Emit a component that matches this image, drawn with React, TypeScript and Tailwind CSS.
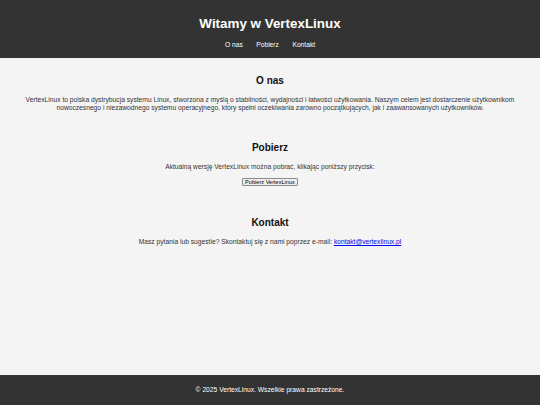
export default function App() {
  return (
    <div className="flex min-h-[405px] flex-col bg-[#f4f4f4] font-['Liberation_Sans',Arial,sans-serif] text-[#333]">
      {/* Header */}
      <header className="flex h-[58px] flex-col items-center bg-[#333] pt-[16px] text-white">
        <h1 className="text-[13.4px] leading-[16px] font-bold">Witamy w VertexLinux</h1>
        <nav className="mt-[9px] flex gap-[13.5px] text-[6.7px] leading-[8px]">
          <a href="#onas" className="text-white">O nas</a>
          <a href="#pobierz" className="text-white">Pobierz</a>
          <a href="#kontakt" className="text-white">Kontakt</a>
        </nav>
      </header>

      <main className="flex flex-1 flex-col text-center text-[6.7px] leading-[8px] text-[#333]">
        {/* O nas */}
        <section id="onas" className="px-[20px] pt-[17px]">
          <h2 className="text-[10px] leading-[12px] font-bold text-[#111]">O nas</h2>
          <p className="mt-[9px]">
            VertexLinux to polska dystrybucja systemu Linux, stworzona z myślą o stabilności, wydajności i łatwości użytkowania. Naszym celem jest dostarczenie użytkownikom nowoczesnego i niezawodnego systemu operacyjnego, który spełni oczekiwania zarówno początkujących, jak i zaawansowanych użytkowników.
          </p>
        </section>

        {/* Pobierz */}
        <section id="pobierz" className="flex flex-col items-center px-[20px] pt-[30px]">
          <h2 className="text-[10px] leading-[12px] font-bold text-[#111]">Pobierz</h2>
          <p className="mt-[9px]">Aktualną wersję VertexLinux można pobrać, klikając poniższy przycisk:</p>
          <button
            type="button"
            className="mt-[7px] h-[8px] rounded-[1px] border border-[#8a8a8a] bg-[#efefef] px-[2.5px] text-[5.6px] leading-[6px] text-black"
          >
            Pobierz VertexLinux
          </button>
        </section>

        {/* Kontakt */}
        <section id="kontakt" className="px-[20px] pt-[31px]">
          <h2 className="text-[10px] leading-[12px] font-bold text-[#111]">Kontakt</h2>
          <p className="mt-[9px]">
            Masz pytania lub sugestie? Skontaktuj się z nami poprzez e-mail:{" "}
            <a href="mailto:kontakt@vertexlinux.pl" className="text-[#0000ee] underline">
              kontakt@vertexlinux.pl
            </a>
          </p>
        </section>
      </main>

      {/* Footer */}
      <footer className="flex h-[30px] items-center justify-center bg-[#333] text-[6.7px] leading-[8px] text-white">
        © 2025 VertexLinux. Wszelkie prawa zastrzeżone.
      </footer>
    </div>
  );
}
